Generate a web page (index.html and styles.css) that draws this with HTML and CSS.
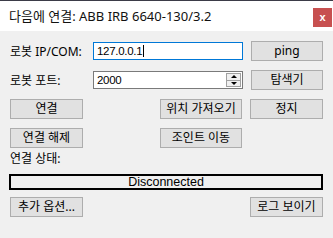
FILE: index.html
```html
<!DOCTYPE html>
<html lang="ko">
<head>
<meta charset="utf-8">
<link rel="stylesheet" href="styles.css">
</head>
<body>
<div class="window">
  <div class="titlebar">
    <span class="title">다음에 연결: ABB IRB 6640-130/3.2</span>
    <div class="close">x</div>
  </div>
  <div class="content">
    <div class="row">
      <span class="lbl">로봇 IP/COM:</span>
      <div class="field focus"><span class="val">127.0.0.1</span><span class="caret"></span></div>
      <div class="btn btn-side">ping</div>
    </div>
    <div class="row gap">
      <span class="lbl">로봇 포트:</span>
      <div class="field"><span class="val">2000</span>
        <div class="spin"><span class="up"></span><span class="down"></span></div>
      </div>
      <div class="btn btn-side">탐색기</div>
    </div>
    <div class="row gap">
      <div class="btn btn-a">연결</div>
      <div class="btn btn-b">위치 가져오기</div>
      <div class="btn btn-c">정지</div>
    </div>
    <div class="row gap">
      <div class="btn btn-a">연결 해제</div>
      <div class="btn btn-b">조인트 이동</div>
    </div>
    <div class="status-label">연결 상태:</div>
    <div class="status">Disconnected</div>
    <div class="row bottom">
      <div class="btn btn-a">추가 옵션...</div>
      <div class="btn btn-c">로그 보이기</div>
    </div>
  </div>
</div>
</body>
</html>
```

FILE: styles.css
```css
html, body {
  margin: 0;
  padding: 0;
  background: #f0f0f0;
}
.window {
  width: 333px;
  height: 238px;
  background: #f0f0f0;
  font-family: "Noto Sans", "Noto Sans CJK KR", sans-serif;
  font-size: 12px;
  color: #000;
  overflow: hidden;
}
.titlebar {
  height: 30px;
  border-top: 1px solid #3b3b47;
  background: #fff;
  display: flex;
  justify-content: space-between;
}
.title {
  font-size: 13px;
  line-height: 30px;
  padding-left: 9px;
  color: #111;
}
.close {
  width: 19px;
  height: 19px;
  margin-top: 7px;
  margin-right: 1px;
  background: #c75050;
  color: #fff;
  font-family: "Liberation Sans", sans-serif;
  font-weight: bold;
  font-size: 11px;
  line-height: 18px;
  text-align: center;
}
.content {
  padding: 10px 0 0 10px;
  width: 313px;
}
.row {
  display: flex;
  align-items: center;
  height: 20px;
}
.row.gap {
  margin-top: 9px;
}
.row.bottom {
  margin-top: 7px;
  justify-content: space-between;
}
.lbl {
  width: 83px;
  white-space: nowrap;
}
.field {
  box-sizing: border-box;
  width: 150px;
  height: 18px;
  border: 1px solid #7a7a7a;
  background: #fff;
  display: flex;
  align-items: center;
  padding-left: 3px;
  font-family: "Liberation Sans", sans-serif;
  font-size: 11.5px;
  position: relative;
}
.field.focus {
  border-color: #0078d7;
}
.val {
  line-height: 16px;
  letter-spacing: -0.3px;
}
.caret {
  display: inline-block;
  width: 1px;
  height: 12px;
  background: #000;
  margin-left: 1px;
}
.spin {
  position: absolute;
  right: 1px;
  top: 1px;
  box-sizing: border-box;
  width: 15px;
  height: 14px;
  border: 1px solid #a0a0a0;
  background: #f0f0f0;
  display: flex;
  flex-direction: column;
}
.spin span {
  flex: 1;
  display: flex;
  align-items: center;
  justify-content: center;
}
.spin .up {
  border-bottom: 1px solid #a0a0a0;
}
.spin .up::before {
  content: "";
  border-left: 3px solid transparent;
  border-right: 3px solid transparent;
  border-bottom: 3px solid #000;
}
.spin .down::before {
  content: "";
  border-left: 3px solid transparent;
  border-right: 3px solid transparent;
  border-top: 3px solid #000;
}
.btn {
  box-sizing: border-box;
  height: 20px;
  background: #e1e1e1;
  border: 1px solid #adadad;
  display: flex;
  align-items: center;
  justify-content: center;
  white-space: nowrap;
  line-height: 18px;
}
.btn-side {
  width: 72px;
  margin-left: 8px;
}
.btn-a {
  width: 73px;
}
.btn-b {
  width: 82px;
  margin-left: 77px;
}
.btn-c {
  width: 73px;
  margin-left: 8px;
}
.status-label {
  height: 20px;
  line-height: 20px;
  margin-top: 1px;
}
.status {
  box-sizing: border-box;
  margin-top: 5px;
  width: 314px;
  margin-left: -1px;
  height: 16px;
  border: 2px solid #000;
  background: #f0f0f0;
  font-family: "Liberation Sans", sans-serif;
  font-size: 12.5px;
  line-height: 12px;
  text-align: center;
}
```
